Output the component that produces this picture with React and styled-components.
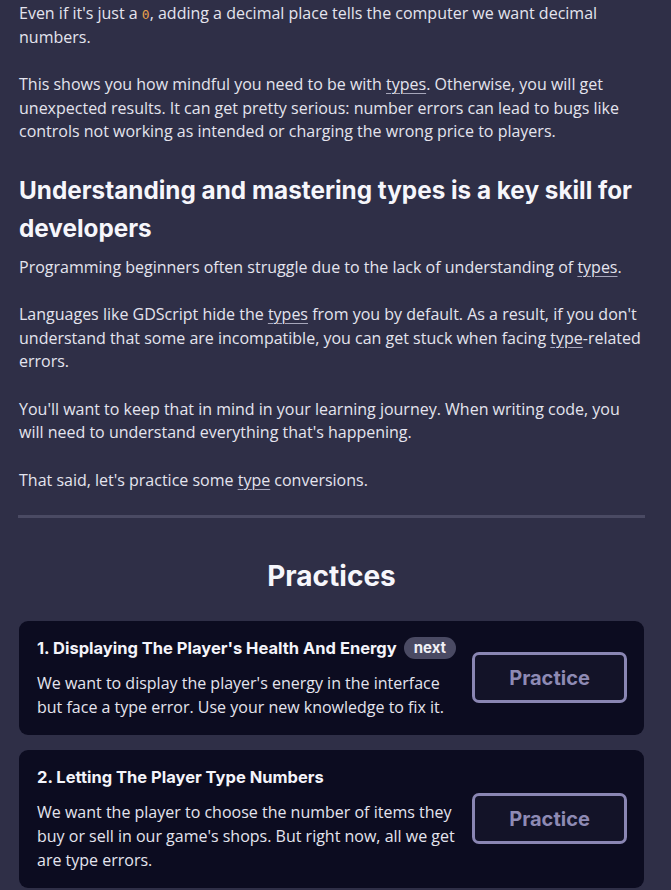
import styled, { createGlobalStyle } from "styled-components"

const GlobalStyle = createGlobalStyle`
    html, body {
        margin: 0;
        padding: 0;
        background: #2f2f47;
    }
    body {
        font-family: "Open Sans", "Noto Sans", sans-serif;
        color: #e4e4ee;
    }
`

const Page = styled.div`
    padding: 2px 27px 0 19px;
    overflow: hidden;
    height: 890px;
    box-sizing: border-box;
`

const Para = styled.p`
    margin: 0 0 24px;
    font-size: 16px;
    line-height: 23.5px;
`

const Term = styled.span`
    text-decoration: underline;
    text-decoration-color: #a6a6ba;
    text-underline-offset: 3px;
    text-decoration-thickness: 1px;
`

const Code = styled.code`
    font-family: "DejaVu Sans Mono", monospace;
    font-size: 13px;
    line-height: 1;
    color: #e8a04a;
`

const Heading = styled.h2`
    font-family: "Inter", "Lato", sans-serif;
    font-weight: 700;
    font-size: 24.3px;
    line-height: 38px;
    color: #f6f6fb;
    margin: 27px 0 9px;
`

const Divider = styled.hr`
    border: none;
    height: 3px;
    background: #4a4a63;
    margin: -1px -1px 0 -1px;
`

const SectionTitle = styled.h2`
    font-family: "Inter", "Lato", sans-serif;
    font-weight: 700;
    font-size: 28px;
    line-height: 34px;
    text-align: center;
    color: #f6f6fb;
    margin: 41px 0 28px;
`

const CardList = styled.div`
    display: flex;
    flex-direction: column;
    gap: 15px;
`

const Card = styled.div`
    background: #0c0c20;
    border-radius: 9px;
    padding: 15px 17px 16px 18px;
    display: grid;
    grid-template-columns: 1fr 155px;
    align-items: center;
    column-gap: 15px;
`

const CardText = styled.div`
    display: flex;
    flex-direction: column;
    gap: 11px;
`

const CardTitle = styled.div`
    display: flex;
    align-items: center;
    gap: 7px;
    white-space: nowrap;
    font-family: "Inter", "Lato", sans-serif;
    font-weight: 700;
    font-size: 16.5px;
    color: #f4f4fa;
    line-height: 24px;
`

const Badge = styled.span`
    background: #4a4a63;
    color: #f0f0f6;
    border-radius: 11px;
    padding: 0 10px;
    font-size: 15px;
    line-height: 22px;
`

const CardDesc = styled.p`
    margin: 0;
    font-size: 16px;
    line-height: 24px;
    color: #e4e4ee;
`

const PracticeButton = styled.button`
    height: 51px;
    border: 3px solid #8a86b3;
    border-radius: 7px;
    background: #131328;
    color: #8e8ab4;
    font-family: "Inter", "Lato", sans-serif;
    font-weight: 700;
    font-size: 20px;
    cursor: pointer;
`

const practices = [
    {
        title: "1. Displaying The Player's Health And Energy",
        next: true,
        desc: "We want to display the player's energy in the interface but face a type error. Use your new knowledge to fix it.",
    },
    {
        title: "2. Letting The Player Type Numbers",
        next: false,
        desc: "We want the player to choose the number of items they buy or sell in our game's shops. But right now, all we get are type errors.",
    },
]

export default function App() {
    return (
        <>
            <GlobalStyle />
            <Page>
                <Para>
                    Even if it's just a <Code>0</Code>, adding a decimal place tells the computer we want decimal numbers.
                </Para>
                <Para>
                    This shows you how mindful you need to be with <Term>types</Term>. Otherwise, you will get unexpected results. It can get pretty serious: number errors can lead to bugs like controls not working as intended or charging the wrong price to players.
                </Para>
                <Heading>Understanding and mastering types is a key skill for developers</Heading>
                <Para>
                    Programming beginners often struggle due to the lack of understanding of <Term>types</Term>.
                </Para>
                <Para>
                    Languages like GDScript hide the <Term>types</Term> from you by default. As a result, if you don't understand that some are incompatible, you can get stuck when facing <Term>type</Term>-related errors.
                </Para>
                <Para>
                    You'll want to keep that in mind in your learning journey. When writing code, you will need to understand everything that's happening.
                </Para>
                <Para>
                    That said, let's practice some <Term>type</Term> conversions.
                </Para>
                <Divider />
                <SectionTitle>Practices</SectionTitle>
                <CardList>
                    {practices.map(p => (
                        <Card key={p.title}>
                            <CardText>
                                <CardTitle>
                                    {p.title}
                                    {p.next && <Badge>next</Badge>}
                                </CardTitle>
                                <CardDesc>{p.desc}</CardDesc>
                            </CardText>
                            <PracticeButton>Practice</PracticeButton>
                        </Card>
                    ))}
                </CardList>
            </Page>
        </>
    )
}
